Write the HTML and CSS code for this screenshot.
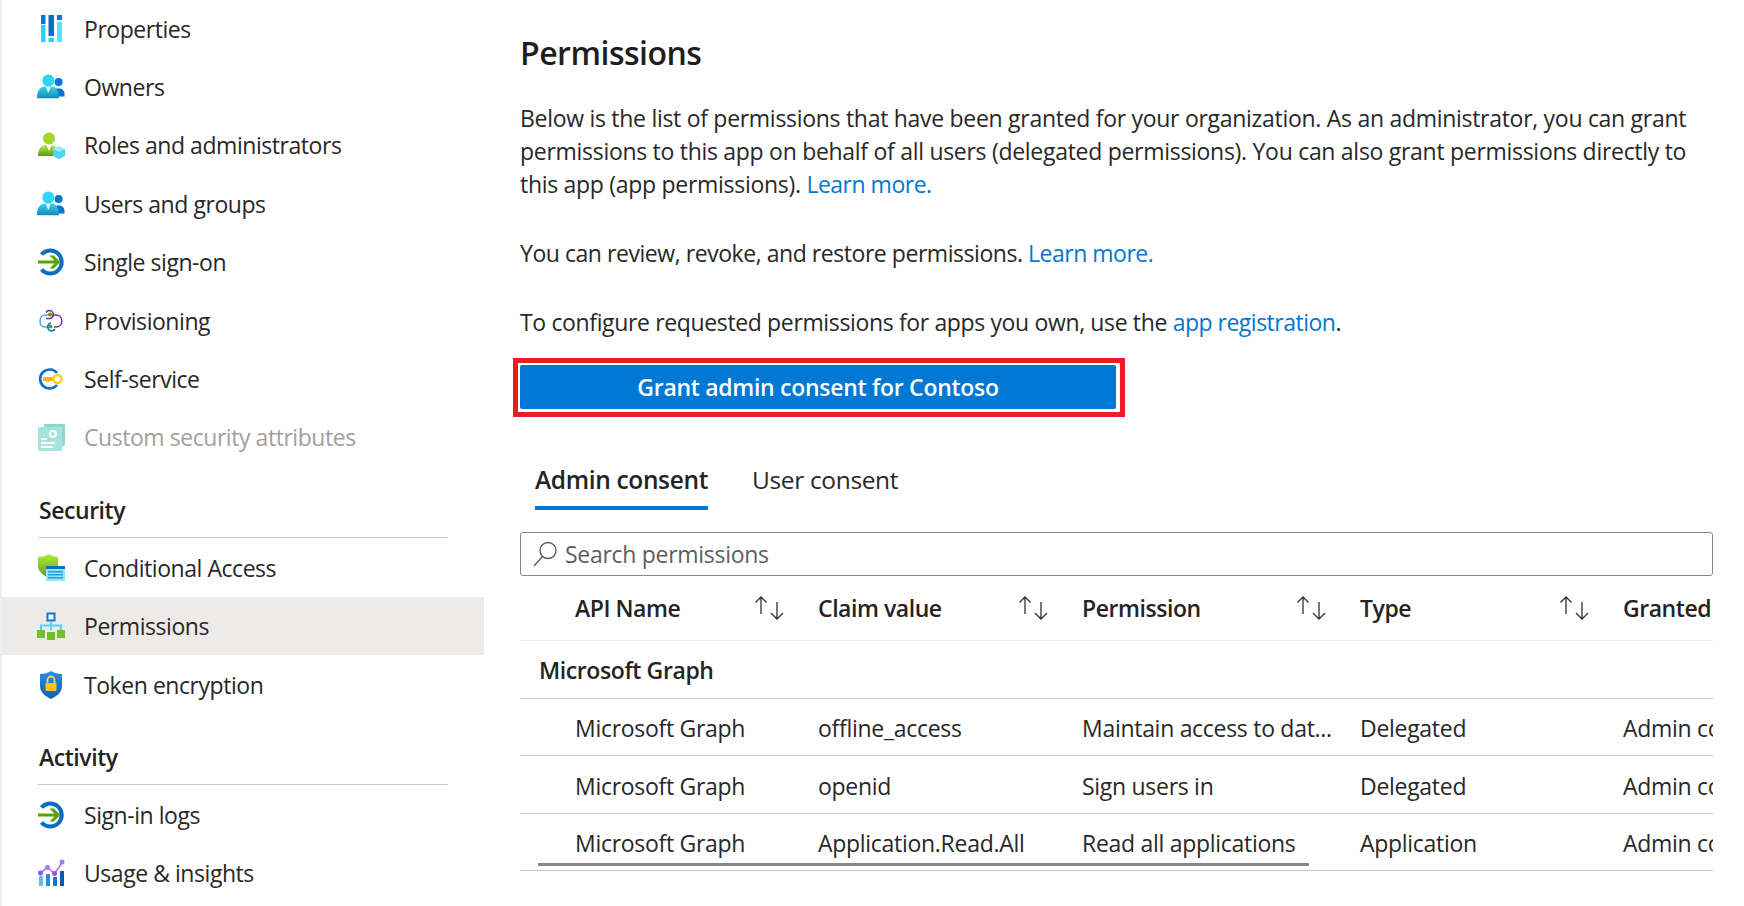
FILE: index.html
```html
<!DOCTYPE html>
<html lang="en">
<head>
    <meta charset="UTF-8">
    <meta name="viewport" content="width=device-width, initial-scale=1.0">
    <title>Permissions</title>
    <link rel="stylesheet" href="styles.css">
</head>
<body>

<svg class="defs" width="0" height="0" aria-hidden="true">
    <defs>
        <linearGradient id="skyGrad" x1="0" y1="0" x2="0" y2="1">
            <stop offset="0" stop-color="#32d4f5"/>
            <stop offset="1" stop-color="#198ab3"/>
        </linearGradient>
        <linearGradient id="greenGrad" x1="0" y1="0" x2="0" y2="1">
            <stop offset="0" stop-color="#b4ec36"/>
            <stop offset="1" stop-color="#5e9624"/>
        </linearGradient>
        <linearGradient id="shieldGrad" x1="0" y1="0" x2="0" y2="1">
            <stop offset="0" stop-color="#2f8fe0"/>
            <stop offset="1" stop-color="#0f5fb0"/>
        </linearGradient>
        <symbol id="people" viewBox="0 0 28 28">
            <path d="M16 20.500c0-3 2-5 5-5h1c3 0 5.500 2 5.500 5.500v2.500H17z" fill="#0078d4"/>
            <circle cx="21.600" cy="9" r="4" fill="#0078d4"/>
            <path d="M0 24.500c0-6 2.500-10.500 8-11h7c4.500.5 7 5 7 11 0 .5-.5.800-1 .800H1c-.5 0-1-.3-1-.8z" fill="url(#skyGrad)"/>
            <circle cx="11.300" cy="7.500" r="6" fill="#32d4f5"/>
            <path d="M9 14h4.600l-2.300 6z" fill="#fff"/>
        </symbol>
        <symbol id="signin" viewBox="0 0 28 28">
            <path d="M4.500 6.500A11.500 11.500 0 1 1 4.500 21.500" fill="none" stroke="#0a6fc2" stroke-width="4"/>
            <path d="M1 12.500h16.500l-5-5h4.300l6.500 6.500-6.500 6.500h-4.300l5-5H1z" fill="#57a300"/>
        </symbol>
        <symbol id="sort" viewBox="0 0 30 24">
            <path d="M6 18V1M.5 6.500 6 1l5.500 5.500M22 6v17M16 17l6 6 6-6" fill="none" stroke="#323130" stroke-width="1.300"/>
        </symbol>
    </defs>
</svg>

<div class="page">
    <nav class="sidebar">
        <a class="nav-item">
            <svg class="nav-icon" viewBox="0 0 28 28">
                <rect x="4" width="4.500" height="9" fill="#0078d4"/>
                <rect x="4" y="10" width="4.500" height="17" fill="#32cdf0"/>
                <rect x="11.500" width="5.500" height="21" fill="#0f6cc9"/>
                <rect x="11.500" y="23" width="5.500" height="4" fill="#32cdf0"/>
                <rect x="20" width="5" height="5" fill="#0078d4"/>
                <rect x="20" y="7" width="5" height="20" fill="#50e6ff"/>
            </svg>
            Properties
        </a>
        <a class="nav-item"><svg class="nav-icon"><use href="#people"/></svg>Owners</a>
        <a class="nav-item">
            <svg class="nav-icon" viewBox="0 0 28 28">
                <path d="M1 25c0-6 2.500-10 7-11h7c4 1 6 5 6 11z" fill="url(#greenGrad)"/>
                <circle cx="12" cy="7.500" r="6" fill="#a4d72b"/>
                <path d="M9.500 14h5l-2.500 6z" fill="#fff"/>
                <path d="M22 15l6 3v7l-6 3-6-3v-7z" fill="#9cecfb"/>
                <path d="M16 18l6 3 6-3v7l-6 3-6-3z" fill="#50d4f0"/>
            </svg>
            Roles and administrators
        </a>
        <a class="nav-item"><svg class="nav-icon"><use href="#people"/></svg>Users and groups</a>
        <a class="nav-item"><svg class="nav-icon"><use href="#signin"/></svg>Single sign-on</a>
        <a class="nav-item">
            <svg class="nav-icon" viewBox="0 0 28 28" fill="none" stroke-width="1.500">
                <path d="M9 5.500a4 4 0 1 1 4 6H9" stroke="#7b2f9b"/>
                <path d="M15 8h4c3.500 0 6 2.500 6 6s-2.500 6-6 6h-2" stroke="#7b2f9b"/>
                <path d="M12 8H8c-3 0-5 2.500-5 6s2 6 5 6h4" stroke="#4aa8e8"/>
                <path d="M18 22a4 4 0 1 1-4-6" stroke="#0a6fc2"/>
                <circle cx="13" cy="7.500" r="2" fill="#57a300" stroke="none"/>
                <circle cx="13.500" cy="19.500" r="2" fill="#57a300" stroke="none"/>
            </svg>
            Provisioning
        </a>
        <a class="nav-item">
            <svg class="nav-icon" viewBox="0 0 28 28">
                <path d="M20 8A9.500 9.500 0 1 0 20 20" fill="none" stroke="#0a6fc2" stroke-width="2.600"/>
                <path d="M6 12h13v4H13l-1 1.500-1-1.500-1 1.500-1-1.500H6z" fill="#f2b01e"/>
                <circle cx="20.500" cy="14" r="4" fill="#fff" stroke="#fcd116" stroke-width="2.400"/>
            </svg>
            Self-service
        </a>
        <a class="nav-item is-disabled">
            <svg class="nav-icon" viewBox="0 0 28 28">
                <path d="M7 1h20a1 1 0 0 1 1 1v20l-4 2H6z" fill="#8fd6cd"/>
                <rect x="1" y="4" width="24" height="24" rx="1" fill="#a5e4dc"/>
                <circle cx="16" cy="11" r="3" fill="none" stroke="#fff" stroke-width="2"/>
                <path d="M4 15h6v2H4zM4 19h14v2H4zM4 23h12v2H4z" fill="#fff"/>
            </svg>
            Custom security attributes
        </a>

        <h2 class="nav-heading">Security</h2>
        <a class="nav-item">
            <svg class="nav-icon" viewBox="0 0 28 28">
                <path d="M12 0c3 2 6 3 9 3v9c0 6-4 9.500-9 12-5-2.500-11-6-11-12V3c4 0 8-1 11-3z" fill="url(#greenGrad)"/>
                <rect x="9" y="12" width="19" height="15" fill="#8fe6fb"/>
                <rect x="9" y="12" width="19" height="3" fill="#0a6fc2"/>
                <path d="M11 17h15v1.500H11zM11 20h15v1.500H11zM11 23h15v1.500H11z" fill="#1f9ee0"/>
            </svg>
            Conditional Access
        </a>
        <a class="nav-item is-active">
            <svg class="nav-icon" viewBox="0 0 28 28">
                <rect x="10.500" y="1.500" width="7" height="7" fill="#fff" stroke="#0a78d4" stroke-width="2"/>
                <path d="M14 9v9M4 18v-4.500h20V18" fill="none" stroke="#50d4f5" stroke-width="2"/>
                <rect y="18" width="8" height="8" fill="#76bc2d"/>
                <rect x="10" y="20" width="8" height="8" fill="#76bc2d"/>
                <rect x="20" y="18" width="8" height="8" fill="#76bc2d"/>
            </svg>
            Permissions
        </a>
        <a class="nav-item">
            <svg class="nav-icon" viewBox="0 0 28 28">
                <path d="M14 0c3 2 7 3 11 3v12c0 6-5 10-11 13C8 25 3 21 3 15V3c4 0 8-1 11-3z" fill="url(#shieldGrad)"/>
                <path d="M10.500 12V9a3.500 3.500 0 0 1 7 0v3" fill="none" stroke="#f2d06a" stroke-width="1.800"/>
                <rect x="8.500" y="12" width="11" height="8" rx="1" fill="#fcc419"/>
            </svg>
            Token encryption
        </a>

        <h2 class="nav-heading">Activity</h2>
        <a class="nav-item"><svg class="nav-icon"><use href="#signin"/></svg>Sign-in logs</a>
        <a class="nav-item">
            <svg class="nav-icon" viewBox="0 0 28 28">
                <rect x="2" y="17" width="4" height="10" fill="#6db8ee"/>
                <rect x="9" y="15" width="4" height="12" fill="#1f8fd8"/>
                <rect x="16" y="18" width="4" height="9" fill="#1578c2"/>
                <rect x="23" y="12" width="4" height="15" fill="#0b5ca8"/>
                <path d="M3.500 14l7-5.500 7 6L25 4" fill="none" stroke="#a67af4" stroke-width="1.600"/>
                <circle cx="3.500" cy="14" r="2.500" fill="#8c5ae8"/>
                <circle cx="10.500" cy="8.500" r="2.500" fill="#a67af4"/>
                <circle cx="17.500" cy="14.500" r="2.500" fill="#8c5ae8"/>
                <circle cx="25" cy="3" r="2.500" fill="#a67af4"/>
            </svg>
            Usage &amp; insights
        </a>
    </nav>

    <main class="content">
        <h1 class="title">Permissions</h1>
        <p class="intro">Below is the list of permissions that have been granted for your organization. As an administrator, you can grant<br>permissions to this app on behalf of all users (delegated permissions). You can also grant permissions directly to<br>this app (app permissions). <a class="link">Learn more.</a></p>
        <p class="intro intro-review">You can review, revoke, and restore permissions. <a class="link">Learn more.</a></p>
        <p class="intro intro-config">To configure requested permissions for apps you own, use the <a class="link">app registration</a>.</p>

        <div class="highlight">
            <button class="grant-btn" type="button">Grant admin consent for Contoso</button>
        </div>

        <div class="tabs">
            <span class="tab is-selected">Admin consent</span>
            <span class="tab">User consent</span>
        </div>

        <div class="search">
            <svg class="search-icon" viewBox="0 0 24 26" fill="none" stroke="#605e5c" stroke-width="1.400">
                <circle cx="15" cy="9.500" r="8"/>
                <path d="M9.500 15.500 1 25"/>
            </svg>
            <span>Search permissions</span>
        </div>

        <div class="grid">
            <div class="row head">
                <div class="cell">API Name<svg class="sort"><use href="#sort"/></svg></div>
                <div class="cell">Claim value<svg class="sort"><use href="#sort"/></svg></div>
                <div class="cell">Permission<svg class="sort"><use href="#sort"/></svg></div>
                <div class="cell">Type<svg class="sort"><use href="#sort"/></svg></div>
                <div class="cell">Granted</div>
            </div>
            <div class="group">Microsoft Graph</div>
            <div class="row">
                <div class="cell">Microsoft Graph</div>
                <div class="cell">offline_access</div>
                <div class="cell">Maintain access to dat...</div>
                <div class="cell">Delegated</div>
                <div class="cell">Admin consent</div>
            </div>
            <div class="row">
                <div class="cell">Microsoft Graph</div>
                <div class="cell">openid</div>
                <div class="cell">Sign users in</div>
                <div class="cell">Delegated</div>
                <div class="cell">Admin consent</div>
            </div>
            <div class="row">
                <div class="cell">Microsoft Graph</div>
                <div class="cell">Application.Read.All</div>
                <div class="cell">Read all applications</div>
                <div class="cell">Application</div>
                <div class="cell">Admin consent</div>
            </div>
            <div class="scroll-thumb"></div>
        </div>
    </main>
</div>

</body>
</html>
```

FILE: styles.css
```css
body {
    margin: 0;
    height: 906px;
    overflow: hidden;
    background: #fff;
    color: #292827;
    font-family: "Open Sans", "Noto Sans", sans-serif;
    font-size: 23px;
    letter-spacing: -0.29px;
}

.defs {
    display: block;
    height: 0;
}

.page {
    display: flex;
    height: 906px;
}

/* sidebar */
.sidebar {
    width: 482px;
    flex: none;
    margin: -1px 36px 0 0;
    border-left: 2px solid #eeeeee;
    letter-spacing: -0.45px;
}

.nav-item {
    display: flex;
    align-items: center;
    height: 58.4px;
    box-sizing: border-box;
    padding: 1px 0 0 35px;
}

.nav-item.is-active {
    background: #edebe9;
}

.nav-item.is-disabled {
    color: #a19f9d;
}

.nav-icon {
    width: 28px;
    height: 28px;
    flex: none;
    margin-right: 19px;
}

.nav-heading {
    margin: 0 36px;
    padding: 29px 0 12px 1px;
    border-bottom: 1.5px solid #c8c6c4;
    font-size: 23px;
    font-weight: 600;
    line-height: 30px;
    color: #252423;
}

/* main */
.content {
    width: 1193px;
    flex: none;
}

.title {
    margin: 33px 0 29px;
    font-size: 32px;
    font-weight: 600;
    line-height: 40px;
    letter-spacing: -0.5px;
    color: #1f1e1d;
}

.intro {
    margin: 0 0 36px;
    line-height: 33px;
    white-space: nowrap;
}

.intro-review {
    letter-spacing: -0.45px;
}

.intro-config {
    letter-spacing: -0.36px;
}

.link {
    color: #0078d4;
    letter-spacing: -0.5px;
}

.highlight {
    width: 612px;
    height: 59px;
    margin: -17px 0 0 -7px;
    box-sizing: border-box;
    padding: 2px 4px 3px 2px;
    border: 5px solid #ed1c24;
}

.grant-btn {
    display: block;
    width: 100%;
    height: 100%;
    border: none;
    border-radius: 2px;
    background: #0078d4;
    color: #fff;
    font: inherit;
    font-weight: 600;
    letter-spacing: inherit;
}

.tabs {
    display: flex;
    gap: 44px;
    margin: 40px 0 22px 15px;
    font-size: 24.500px;
    letter-spacing: -0.35px;
}

.tab {
    height: 45px;
    padding-bottom: 4px;
    border-bottom: 4px solid transparent;
    line-height: 45px;
}

.tab.is-selected {
    font-weight: 600;
    border-bottom-color: #0078d4;
    color: #252423;
}

.search {
    display: flex;
    align-items: center;
    gap: 8px;
    height: 44px;
    box-sizing: border-box;
    padding-left: 12px;
    border: 1.5px solid #8a8886;
    border-radius: 3px;
    color: #605e5c;
}

.search-icon {
    width: 24px;
    height: 26px;
    flex: none;
}

/* permissions table */
.grid {
    position: relative;
    overflow: hidden;
}

.row {
    display: grid;
    grid-template-columns: 243px 264px 278px 263px 200px;
    height: 57.4px;
    box-sizing: border-box;
    padding: 2px 0 0 55px;
    align-items: center;
    border-bottom: 1.5px solid #c8c6c4;
    white-space: nowrap;
}

.row.head {
    height: 65px;
    padding-top: 0;
    border-bottom-color: #edebe9;
    font-weight: 600;
    letter-spacing: -0.45px;
    color: #252423;
}

.cell {
    display: flex;
    align-items: center;
    justify-content: space-between;
    padding-right: 33px;
}

.sort {
    width: 30px;
    height: 24px;
}

.group {
    display: flex;
    align-items: center;
    height: 58px;
    box-sizing: border-box;
    padding-left: 19px;
    border-bottom: 1.5px solid #c8c6c4;
    font-weight: 600;
    letter-spacing: -0.4px;
    color: #252423;
}

/* horizontal scrollbar lies over the last row */
.scroll-thumb {
    position: absolute;
    left: 18px;
    bottom: 5px;
    width: 771px;
    height: 3px;
    background: #8a8886;
}
```
